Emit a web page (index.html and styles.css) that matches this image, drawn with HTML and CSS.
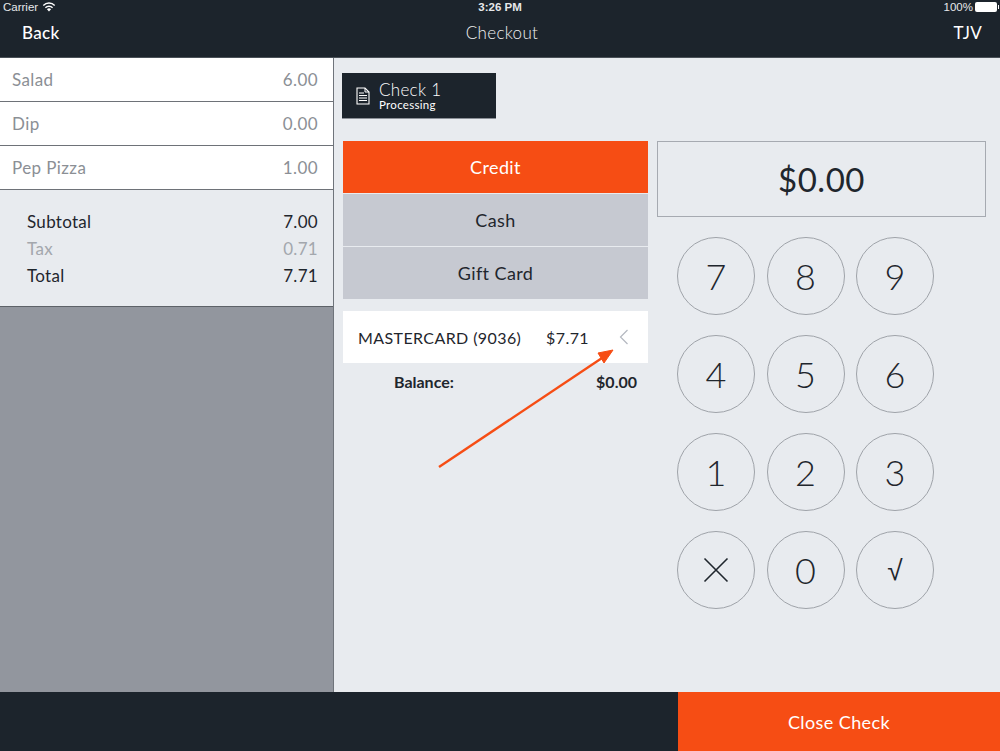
FILE: index.html
```html
<!DOCTYPE html>
<html lang="en">
<head>
    <meta charset="UTF-8">
    <meta name="viewport" content="width=device-width, initial-scale=1.0">
    <title>Checkout</title>
    <link rel="stylesheet" href="styles.css">
</head>
<body>
    <header class="topbar">
        <div class="status">
            <div class="status-left">
                <span>Carrier</span>
                <svg class="wifi" width="14" height="10" viewBox="0 0 14 10"><path d="M7 9.6 4.9 7.3a3 3 0 0 1 4.2 0z" fill="#fff"/><path d="M3.4 5.7a5.1 5.1 0 0 1 7.2 0M1.3 3.4a8.1 8.1 0 0 1 11.4 0" fill="none" stroke="#fff" stroke-width="1.4"/></svg>
            </div>
            <div class="status-time">3:26 PM</div>
            <div class="status-right">
                <span>100%</span>
                <span class="battery"></span>
            </div>
        </div>
        <nav class="nav">
            <span class="nav-back">Back</span>
            <span class="nav-title">Checkout</span>
            <span class="nav-user">TJV</span>
        </nav>
    </header>

    <main class="main">
        <aside class="sidebar">
            <div class="ticket">
                <div class="item"><span>Salad</span><span>6.00</span></div>
                <div class="item"><span>Dip</span><span>0.00</span></div>
                <div class="item"><span>Pep Pizza</span><span>1.00</span></div>
                <div class="summary">
                    <div class="summary-row"><span>Subtotal</span><span>7.00</span></div>
                    <div class="summary-row muted"><span>Tax</span><span>0.71</span></div>
                    <div class="summary-row total"><span>Total</span><span>7.71</span></div>
                </div>
            </div>
        </aside>

        <section class="payment">
            <div class="check-tab">
                <svg class="doc" width="14" height="18" viewBox="0 0 14 18"><path d="M1 1h8l4 4v12H1z" fill="none" stroke="#fff" stroke-width="1.1"/><path d="M9 1v4h4M3 6h5M3 8.5h8M3 11h8M3 13.5h8" fill="none" stroke="#fff" stroke-width="1"/></svg>
                <div class="check-text">
                    <div class="check-name">Check 1</div>
                    <div class="check-state">Processing</div>
                </div>
            </div>

            <div class="columns">
                <div class="tender">
                    <div class="tender-btn active">Credit</div>
                    <div class="tender-btn">Cash</div>
                    <div class="tender-btn">Gift Card</div>
                    <div class="card-row">
                        <span class="card-name">MASTERCARD (9036)</span>
                        <span class="card-amount">$7.71</span>
                        <svg class="chevron" width="10" height="16" viewBox="0 0 10 16"><path d="M8.5 1 1.5 8l7 7" fill="none" stroke="#b4b8c0" stroke-width="1.2"/></svg>
                    </div>
                    <div class="balance"><span>Balance:</span><span>$0.00</span></div>
                </div>

                <div class="entry">
                    <div class="amount">$0.00</div>
                    <div class="keypad">
                        <div class="key">7</div>
                        <div class="key">8</div>
                        <div class="key">9</div>
                        <div class="key">4</div>
                        <div class="key">5</div>
                        <div class="key">6</div>
                        <div class="key">1</div>
                        <div class="key">2</div>
                        <div class="key">3</div>
                        <div class="key"><svg width="26" height="26" viewBox="0 0 26 26"><path d="M1.5 1.5l23 23M24.500 1.500l-23 23" fill="none" stroke="#1f262d" stroke-width="1.6"/></svg></div>
                        <div class="key">0</div>
                        <div class="key key-sqrt">√</div>
                    </div>
                </div>
            </div>
        </section>

        <svg class="arrow" width="200" height="140" viewBox="0 0 200 140"><path d="M2 129 168 18" stroke="#f64d14" stroke-width="2.4" fill="none"/><path d="M176 12 161 15 167 25z" fill="#f64d14" stroke="#f64d14" stroke-width="1"/></svg>
    </main>

    <footer class="footer">
        <div class="close-check">Close Check</div>
    </footer>
</body>
</html>
```

FILE: styles.css
```css
* {
    margin: 0;
    padding: 0;
    box-sizing: border-box;
}

body {
    width: 1000px;
    height: 751px;
    display: flex;
    flex-direction: column;
    overflow: hidden;
    font-family: 'Lato', 'Open Sans', sans-serif;
    background: #e8ebef;
    color: #1f262d;
}

/* top bar */
.topbar {
    height: 58px;
    background: #1c242c;
    color: #ffffff;
    border-bottom: 1px solid #4a5158;
}

.status {
    height: 14px;
    display: grid;
    grid-template-columns: 1fr auto 1fr;
    align-items: center;
    padding: 0 3px;
    font-family: 'Liberation Sans', sans-serif;
    font-size: 11.500px;
    color: #e6e8ea;
}

.status-left {
    display: flex;
    align-items: center;
    gap: 4px;
}

.status-time {
    font-weight: 700;
    font-size: 11.500px;
}

.status-right {
    display: flex;
    align-items: center;
    justify-content: flex-end;
    gap: 2px;
}

.battery {
    position: relative;
    width: 22px;
    height: 10px;
    background: #ffffff;
    border-radius: 2px;
}

.battery::after {
    content: "";
    position: absolute;
    top: 3px;
    right: -2px;
    width: 1px;
    height: 4px;
    background: #ffffff;
}

.nav {
    display: grid;
    grid-template-columns: 1fr auto 1fr;
    align-items: center;
    padding: 8px 18px 0 22px;
    font-size: 17px;
    letter-spacing: 0.3px;
}

.nav-back {
    font-weight: 500;
}

.nav-title {
    font-weight: 300;
    color: #f0f1f2;
}

.nav-user {
    text-align: right;
}

/* main area */
.main {
    position: relative;
    flex: 1;
    display: flex;
}

.sidebar {
    width: 334px;
    background: #92969e;
    border-right: 1px solid #6f747b;
}

.ticket {
    background: #e8ebef;
    border-bottom: 1px solid #5d6268;
}

.item {
    height: 44px;
    display: flex;
    justify-content: space-between;
    align-items: center;
    padding: 0 15px 0 12px;
    background: #ffffff;
    border-bottom: 1px solid #6e7278;
    color: #8b8f95;
    font-size: 17px;
    letter-spacing: 0.4px;
}

.summary {
    height: 116px;
    padding: 18px 15px 0 27px;
    font-size: 17px;
    letter-spacing: 0.3px;
}

.summary-row {
    height: 27px;
    display: flex;
    justify-content: space-between;
    align-items: center;
}

.summary-row.muted {
    color: #a3a7ad;
}

.payment {
    flex: 1;
    padding: 15px 14px 0 8px;
}

.check-tab {
    width: 154px;
    height: 46px;
    display: flex;
    align-items: center;
    gap: 9px;
    padding-left: 14px;
    background: #1c242c;
    border: 1px solid #8b9097;
    border-width: 0 0 1px;
    color: #ffffff;
}

.check-name {
    font-size: 17px;
    line-height: 18px;
    letter-spacing: 0.3px;
    font-weight: 300;
}

.check-state {
    font-size: 11.500px;
    line-height: 12px;
    letter-spacing: 0.3px;
}

.columns {
    display: flex;
    gap: 9px;
    margin-top: 22px;
}

.tender {
    width: 305px;
    margin-left: 1px;
}

.tender-btn {
    height: 52px;
    margin-bottom: 1px;
    display: flex;
    align-items: center;
    justify-content: center;
    background: #c6c9d1;
    font-size: 18px;
    letter-spacing: 0.4px;
}

.tender-btn.active {
    background: #f64d14;
    color: #ffffff;
}

.card-row {
    height: 52px;
    margin-top: 12px;
    display: flex;
    align-items: center;
    padding: 0 19px 0 15px;
    background: #ffffff;
    font-size: 16px;
    letter-spacing: 0.4px;
}

.card-name {
    flex: 1;
}

.chevron {
    margin-left: 30px;
}

.balance {
    display: flex;
    justify-content: space-between;
    padding: 9px 11px 0 51px;
    font-size: 16px;
    font-weight: 700;
}

.entry {
    width: 329px;
}

.amount {
    height: 76px;
    display: flex;
    align-items: center;
    justify-content: center;
    border: 1px solid #a6aab1;
    font-size: 33px;
    font-weight: 400;
    letter-spacing: 0.5px;
}

.keypad {
    display: grid;
    grid-template-columns: repeat(3, 78px);
    gap: 20px 11.500px;
    margin: 20px 0 0 20px;
}

.key {
    width: 78px;
    height: 78px;
    display: flex;
    align-items: center;
    justify-content: center;
    border: 1px solid #9fa3a9;
    border-radius: 50%;
    font-size: 36px;
    font-weight: 300;
}

.key-sqrt {
    font-family: 'DejaVu Sans', sans-serif;
    font-size: 28px;
}

/* annotation over the card row */
.arrow {
    position: absolute;
    left: 437px;
    top: 280px;
}

/* bottom bar */
.footer {
    height: 59px;
    display: flex;
    justify-content: flex-end;
    background: #1c242c;
}

.close-check {
    width: 322px;
    display: flex;
    align-items: center;
    justify-content: center;
    background: #f64d14;
    color: #ffffff;
    font-size: 18px;
    letter-spacing: 0.4px;
}
```
